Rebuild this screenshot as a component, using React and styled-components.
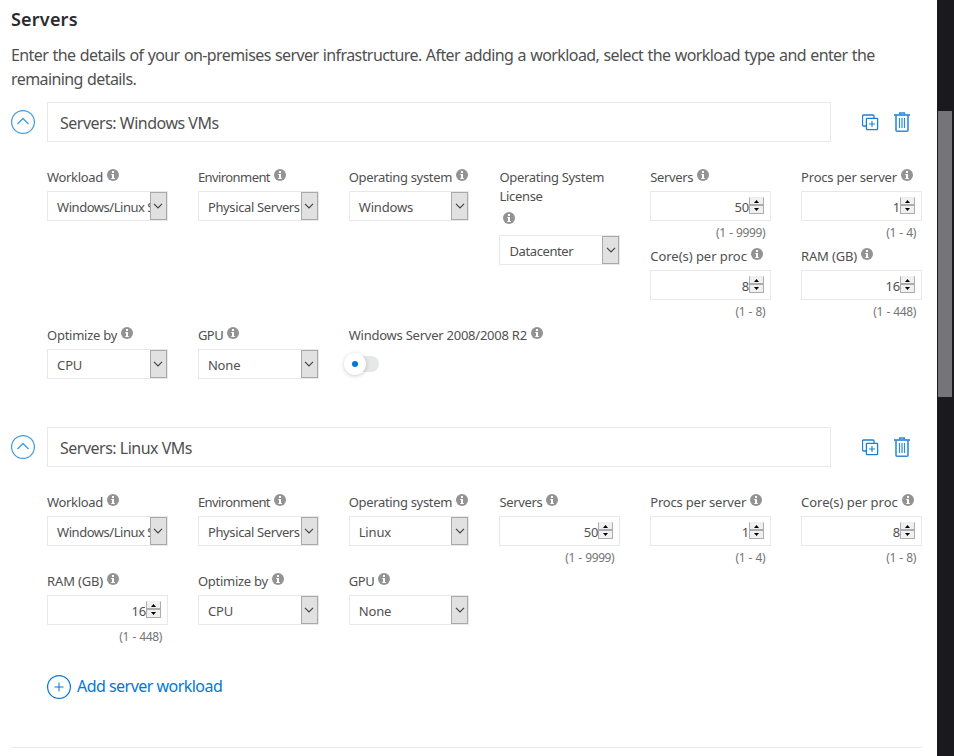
import React from "react";
import styled, { createGlobalStyle } from "styled-components";

const Global = createGlobalStyle`
  * { box-sizing: border-box; }
  body { margin: 0; background: #fff; overflow: hidden; }
`;

const Page = styled.div`
  display: flex;
  width: 954px;
  height: 756px;
  overflow: hidden;
  font-family: "Noto Sans", "Open Sans", sans-serif;
  color: #505050;
`;

const Main = styled.main`
  width: 937px;
  height: 756px;
  padding: 0 15px 0 11px;
`;

const ScrollTrack = styled.div`
  width: 17px;
  height: 756px;
  padding: 111px 2px 0 1px;
  background: #1a191e;
`;

const ScrollThumb = styled.div`
  width: 14px;
  height: 286px;
  background: #757477;
`;

const Heading = styled.h2`
  margin: 0;
  padding-top: 7px;
  height: 43px;
  font-size: 18px;
  line-height: 24px;
  font-weight: 600;
  letter-spacing: 0.2px;
  color: #2b2b2f;
`;

const Intro = styled.p`
  margin: 0 0 12px;
  height: 47px;
  font-size: 16px;
  line-height: 24px;
  letter-spacing: -0.59px;
  word-spacing: 0.7px;
  white-space: nowrap;
`;

const Workload = styled.section`
  height: ${(p) => p.$height}px;
`;

const WorkloadHeader = styled.header`
  display: flex;
  align-items: center;
  height: 40px;
`;

const CollapseButton = styled.button`
  width: 24px;
  height: 24px;
  margin: 0 12px 0 0;
  padding: 0;
  border: 0;
  background: none;
  svg { display: block; }
`;

const NameBox = styled.div`
  width: 784px;
  height: 40px;
  border: 1px solid #e8e8e8;
  padding: 1px 12px 0;
  font-size: 16px;
  line-height: 39px;
  letter-spacing: -0.5px;
`;

const Actions = styled.div`
  display: flex;
  align-items: center;
  gap: 15px;
  margin-left: 31px;
  svg { display: block; }
`;

const Fields = styled.div`
  display: grid;
  grid-template-columns: repeat(6, 120.8px);
  grid-auto-rows: 79px;
  column-gap: 30px;
  margin: 25px 0 0 36.1px;
`;

const Field = styled.div`
  grid-row: ${(p) => p.$row || "auto"} / span ${(p) => p.$rows || 1};
  grid-column: ${(p) => p.$col || "auto"} / span ${(p) => p.$cols || 1};
  min-width: 0;
`;

const Label = styled.div`
  display: flex;
  flex-direction: ${(p) => (p.$tall ? "column" : "row")};
  column-gap: 4px;
  height: ${(p) => (p.$tall ? 68 : 24)}px;
  font-size: 13px;
  line-height: 19px;
  letter-spacing: ${(p) => p.$spacing ?? -0.1}px;
`;

const LabelText = styled.span`
  padding-top: 1px;
  white-space: pre;
`;

const InfoMark = styled.svg`
  display: block;
  flex: none;
  width: 12px;
  height: 12px;
  margin: ${(p) => (p.$below ? "6px 0 0 4px" : "2px 0 0")};
`;

const Control = styled.div`
  display: flex;
  width: 120.8px;
  height: 30px;
  border: 1px solid #e8e8e8;
  font-size: 13px;
  line-height: 31px;
`;

const SelectValue = styled.span`
  flex: 1;
  min-width: 0;
  padding-left: 9px;
  overflow: hidden;
  white-space: nowrap;
  letter-spacing: ${(p) => p.$spacing ?? -0.15}px;
`;

const SelectArrow = styled.span`
  display: grid;
  place-items: center;
  width: 17px;
  height: 28px;
  border: 1px solid #a9a9a9;
  background: #e1e1e1;
  svg { display: block; }
`;

const NumberValue = styled.span`
  flex: 1;
  text-align: right;
  letter-spacing: -0.2px;
`;

const Spinner = styled.span`
  display: grid;
  grid-template-rows: 8px 9px;
  width: 15px;
  height: 17px;
  margin: 5px 6px 0 0;
`;

const Step = styled.span`
  display: grid;
  place-items: center;
  border: 1px solid #acacac;
  border-top-color: ${(p) => (p.$up ? "#eee" : "#acacac")};
  background: #f0f0f0;
  svg { display: block; }
`;

const Range = styled.div`
  width: 120.8px;
  padding: 2px 6px 0 0;
  text-align: right;
  font-size: 12px;
  line-height: 19px;
  letter-spacing: -0.4px;
  word-spacing: 0.7px;
  color: #757575;
`;

const Switch = styled.div`
  display: flex;
  align-items: center;
  width: 30px;
  height: 16px;
  margin-top: 7px;
  border-radius: 8px;
  background: #e6e7e9;
`;

const Knob = styled.span`
  display: grid;
  place-items: center;
  flex: none;
  width: 22px;
  height: 22px;
  margin: -1px 0 0 -5px;
  border-radius: 50%;
  background: #fff;
  box-shadow: 0 1px 4px rgba(0, 0, 0, 0.2);
  &::after {
    content: "";
    width: 6px;
    height: 6px;
    border-radius: 50%;
    background: #0078d7;
  }
`;

const AddButton = styled.button`
  display: flex;
  align-items: center;
  gap: 6px;
  height: 24px;
  margin: 0 0 0 36px;
  padding: 0;
  border: 0;
  background: none;
  font: inherit;
  font-size: 16px;
  letter-spacing: -0.53px;
  color: #0078d7;
  svg { display: block; }
`;

const AddText = styled.span`
  padding-bottom: 2px;
`;

const Divider = styled.hr`
  width: 911px;
  height: 1px;
  margin: 48px 0 0;
  border: 0;
  background: #e8e8e8;
`;

const Info = ({ below }) => (
  <InfoMark $below={below} viewBox="0 0 12 12">
    <circle cx="6" cy="6" r="6" fill="#939393" />
    <path d="M5 2h2v2H5zM4.3 5H7v4h.8v1H4.3V9H5V6h-.7z" fill="#fff" />
  </InfoMark>
);

const FieldLabel = ({ text, spacing }) => {
  const tall = text.includes("\n");
  return (
    <Label $tall={tall} $spacing={spacing}>
      <LabelText>{text}</LabelText>
      <Info below={tall} />
    </Label>
  );
};

const SelectField = ({ label, value, place, spacing, valueSpacing }) => (
  <Field {...place}>
    <FieldLabel text={label} spacing={spacing} />
    <Control>
      <SelectValue $spacing={valueSpacing}>{value}</SelectValue>
      <SelectArrow>
        <svg width="10" height="6" viewBox="0 0 10 6">
          <path d="M1 .8 5 4.8 9 .8" fill="none" stroke="#444" strokeWidth="1.2" />
        </svg>
      </SelectArrow>
    </Control>
  </Field>
);

const NumberField = ({ label, value, range, place, spacing }) => (
  <Field {...place}>
    <FieldLabel text={label} spacing={spacing} />
    <Control>
      <NumberValue>{value}</NumberValue>
      <Spinner>
        <Step $up>
          <svg width="5" height="3" viewBox="0 0 5 3"><path d="M0 3 2.5 0 5 3z" /></svg>
        </Step>
        <Step>
          <svg width="5" height="3" viewBox="0 0 5 3"><path d="M0 0h5L2.5 3z" /></svg>
        </Step>
      </Spinner>
    </Control>
    <Range>({range})</Range>
  </Field>
);

const SwitchField = ({ label, place, spacing }) => (
  <Field {...place}>
    <FieldLabel text={label} spacing={spacing} />
    <Switch><Knob /></Switch>
  </Field>
);

const kinds = { select: SelectField, number: NumberField, toggle: SwitchField };

const WorkloadCard = ({ name, fields, height }) => (
  <Workload $height={height}>
    <WorkloadHeader>
      <CollapseButton aria-label="Collapse">
        <svg width="24" height="24" viewBox="0 0 24 24" fill="none" stroke="#3f9be2">
          <circle cx="12" cy="12" r="11.4" strokeWidth="1.2" />
          <path d="M6.5 14 12 8.5l5.5 5.5" strokeWidth="1.3" />
        </svg>
      </CollapseButton>
      <NameBox>{name}</NameBox>
      <Actions>
        <svg width="17" height="17" viewBox="0 0 17 17" fill="none" stroke="#1b80d4">
          <path d="M4 12H1.5a1 1 0 0 1-1-1V2a1 1 0 0 1 1-1H11a1 1 0 0 1 1 1v2" strokeWidth="1.3" />
          <rect x="4.4" y="4.4" width="11.2" height="11.2" rx=".6" strokeWidth="1.3" />
          <path d="M10 7v6M7 10h6" strokeWidth="1.1" />
        </svg>
        <svg width="16" height="20" viewBox="0 0 16 20" fill="none" stroke="#2e8cdb">
          <path d="M0 3h16" strokeWidth="1.7" />
          <path d="M5.7 2.5V1h4.6v1.5" strokeWidth="1.7" />
          <path d="M2 3v15.2a1 1 0 0 0 1 1h10a1 1 0 0 0 1-1V3" strokeWidth="1.6" />
          <path d="M5.5 6v10M8 6v10M10.5 6v10" strokeWidth="1.2" />
        </svg>
      </Actions>
    </WorkloadHeader>
    <Fields>
      {fields.map(({ kind, ...rest }) => {
        const Kind = kinds[kind];
        return <Kind key={rest.label} {...rest} />;
      })}
    </Fields>
  </Workload>
);

const at = (col, row, cols, rows) => ({ $col: col, $row: row, $cols: cols, $rows: rows });

const windowsFields = [
  { kind: "select", label: "Workload", value: "Windows/Linux Server", spacing: -0.35, valueSpacing: -0.47, place: at(1, 1) },
  { kind: "select", label: "Environment", value: "Physical Servers", spacing: -0.58, valueSpacing: -0.37, place: at(2, 1) },
  { kind: "select", label: "Operating system", value: "Windows", spacing: -0.33, place: at(3, 1) },
  { kind: "select", label: "Operating System\nLicense", value: "Datacenter", spacing: -0.31, valueSpacing: -0.4, place: at(4, 1, 1, 2) },
  { kind: "number", label: "Servers", value: "50", range: "1 - 9999", spacing: -0.35, place: at(5, 1) },
  { kind: "number", label: "Procs per server", value: "1", range: "1 - 4", spacing: -0.2, place: at(6, 1) },
  { kind: "number", label: "Core(s) per proc", value: "8", range: "1 - 8", spacing: -0.04, place: at(5, 2) },
  { kind: "number", label: "RAM (GB)", value: "16", range: "1 - 448", spacing: -0.18, place: at(6, 2) },
  { kind: "select", label: "Optimize by", value: "CPU", spacing: -0.27, place: at(1, 3) },
  { kind: "select", label: "GPU", value: "None", spacing: -0.5, place: at(2, 3) },
  { kind: "toggle", label: "Windows Server 2008/2008 R2", spacing: -0.24, place: at(3, 3, 2) },
];

const linuxFields = [
  { kind: "select", label: "Workload", value: "Windows/Linux Server", spacing: -0.35, valueSpacing: -0.47 },
  { kind: "select", label: "Environment", value: "Physical Servers", spacing: -0.58, valueSpacing: -0.37 },
  { kind: "select", label: "Operating system", value: "Linux", spacing: -0.33 },
  { kind: "number", label: "Servers", value: "50", range: "1 - 9999", spacing: -0.35 },
  { kind: "number", label: "Procs per server", value: "1", range: "1 - 4", spacing: -0.2 },
  { kind: "number", label: "Core(s) per proc", value: "8", range: "1 - 8", spacing: -0.04 },
  { kind: "number", label: "RAM (GB)", value: "16", range: "1 - 448", spacing: -0.18 },
  { kind: "select", label: "Optimize by", value: "CPU", spacing: -0.27 },
  { kind: "select", label: "GPU", value: "None", spacing: -0.4 },
];

export default function App() {
  return (
    <Page>
      <Global />
      <Main>
        <Heading>Servers</Heading>
        <Intro>
          Enter the details of your on-premises server infrastructure. After adding a workload, select the workload type and enter the
          <br />
          remaining details.
        </Intro>
        <WorkloadCard name="Servers: Windows VMs" fields={windowsFields} height={325} />
        <WorkloadCard name="Servers: Linux VMs" fields={linuxFields} height={248} />
        <AddButton>
          <svg width="24" height="24" viewBox="0 0 24 24" fill="none" stroke="#0078d7">
            <circle cx="12" cy="12" r="11.4" strokeWidth="1.2" />
            <path d="M12 7.5v9M7.5 12h9" />
          </svg>
          <AddText>Add server workload</AddText>
        </AddButton>
        <Divider />
      </Main>
      <ScrollTrack><ScrollThumb /></ScrollTrack>
    </Page>
  );
}
